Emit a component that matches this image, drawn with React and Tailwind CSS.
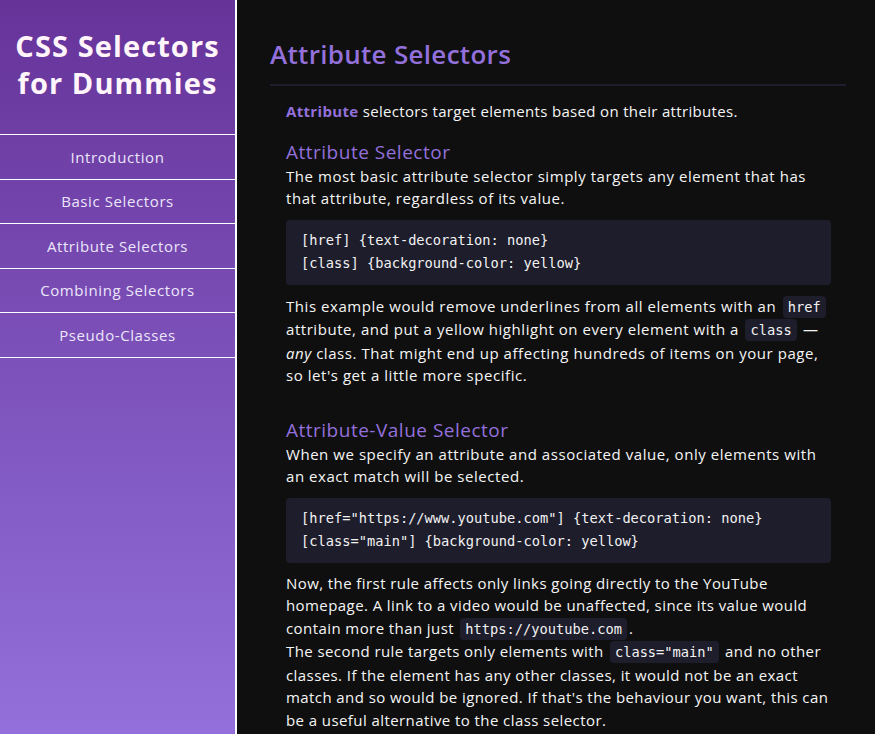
import React from 'react';

const navItems = [
  'Introduction',
  'Basic Selectors',
  'Attribute Selectors',
  'Combining Selectors',
  'Pseudo-Classes',
];

const Code = ({ children }) => (
  <code className="bg-[#1e1d2c] rounded-[4px] mx-[2px] px-[5px] py-[3px] font-['DejaVu_Sans_Mono',monospace] text-[13.7px] tracking-normal text-[#f2f2f2]">
    {children}
  </code>
);

const CodeBlock = ({ lines }) => (
  <pre className="bg-[#1e1d2c] rounded-[4px] mr-[2px] px-[15px] py-[9.5px] font-['DejaVu_Sans_Mono',monospace] text-[13.7px] leading-[23px] tracking-normal text-[#f2f2f2]">
    {lines.map((line, i) => (
      <div key={i}>{line}</div>
    ))}
  </pre>
);

const App = () => {
  return (
    <div className="flex h-screen overflow-hidden bg-[#0f0f0f] font-['Open_Sans',sans-serif]">
      <aside className="w-[237px] shrink-0 h-full bg-linear-to-b from-[#663399] to-[#9370db] border-r-2 border-white">
        <h1 className="text-[29px] font-bold leading-[37px] tracking-[1.1px] text-center text-[#fff5fa] pt-[27px] pb-[33px] border-b border-white">
          CSS Selectors
          <br />
          for Dummies
        </h1>
        <nav>
          {navItems.map((item) => (
            <a
              key={item}
              href="#"
              className="h-[44.6px] border-b border-white flex items-center justify-center text-[15px] tracking-[0.6px] text-[#ece6fb]"
            >
              {item}
            </a>
          ))}
        </nav>
      </aside>

      <main className="flex-1 pl-[33px] pr-[29px] overflow-hidden">
        <h2 className="text-[26px] font-semibold leading-[32px] tracking-[0.3px] text-[#9370db] pt-[38px] pb-[14px] border-b-2 border-[#1f1d2b]">
          Attribute Selectors
        </h2>

        <article className="pl-4 pr-[13px] text-[15px] leading-[22.5px] tracking-[0.55px] text-[#f5f5f5]">
          <p className="mt-[14px] tracking-[0.33px]">
            <strong className="font-bold text-[#9370db]">Attribute</strong> selectors target elements based on their
            attributes.
          </p>

          <section>
            <h3 className="text-[19px] leading-[25px] font-medium tracking-[0.5px] text-[#9370db] mt-[17px]">
              Attribute Selector
            </h3>
            <p>
              The most basic attribute selector simply targets any element that has that attribute, regardless of its
              value.
            </p>
            <div className="mt-[10px]">
              <CodeBlock lines={['[href] {text-decoration: none}', '[class] {background-color: yellow}']} />
            </div>
            <p className="mt-[10px]">
              This example would remove underlines from all elements with an <Code>href</Code> attribute, and put a
              yellow highlight on every element with a <Code>class</Code> — <em>any</em> class. That might end up
              affecting hundreds of items on your page, so let's get a little more specific.
            </p>
          </section>

          <section>
            <h3 className="text-[19px] leading-[25px] font-medium tracking-[0.5px] text-[#9370db] mt-[31px]">
              Attribute-Value Selector
            </h3>
            <p>
              When we specify an attribute and associated value, only elements with an exact match will be selected.
            </p>
            <div className="mt-[10px]">
              <CodeBlock
                lines={['[href="https://www.youtube.com"] {text-decoration: none}', '[class="main"] {background-color: yellow}']}
              />
            </div>
            <p className="mt-[9px] tracking-[0.42px]">
              Now, the first rule affects only links going directly to the YouTube homepage. A link to a video would be
              unaffected, since its value would contain more than just <Code>https://youtube.com</Code>.
              <br />
              The second rule targets only elements with <Code>class="main"</Code> and no other classes. If the element
              has any other classes, it would not be an exact match and so would be ignored. If that's the behaviour you
              want, this can be a useful alternative to the class selector.
            </p>
          </section>
        </article>
      </main>
    </div>
  );
};

export default App;
